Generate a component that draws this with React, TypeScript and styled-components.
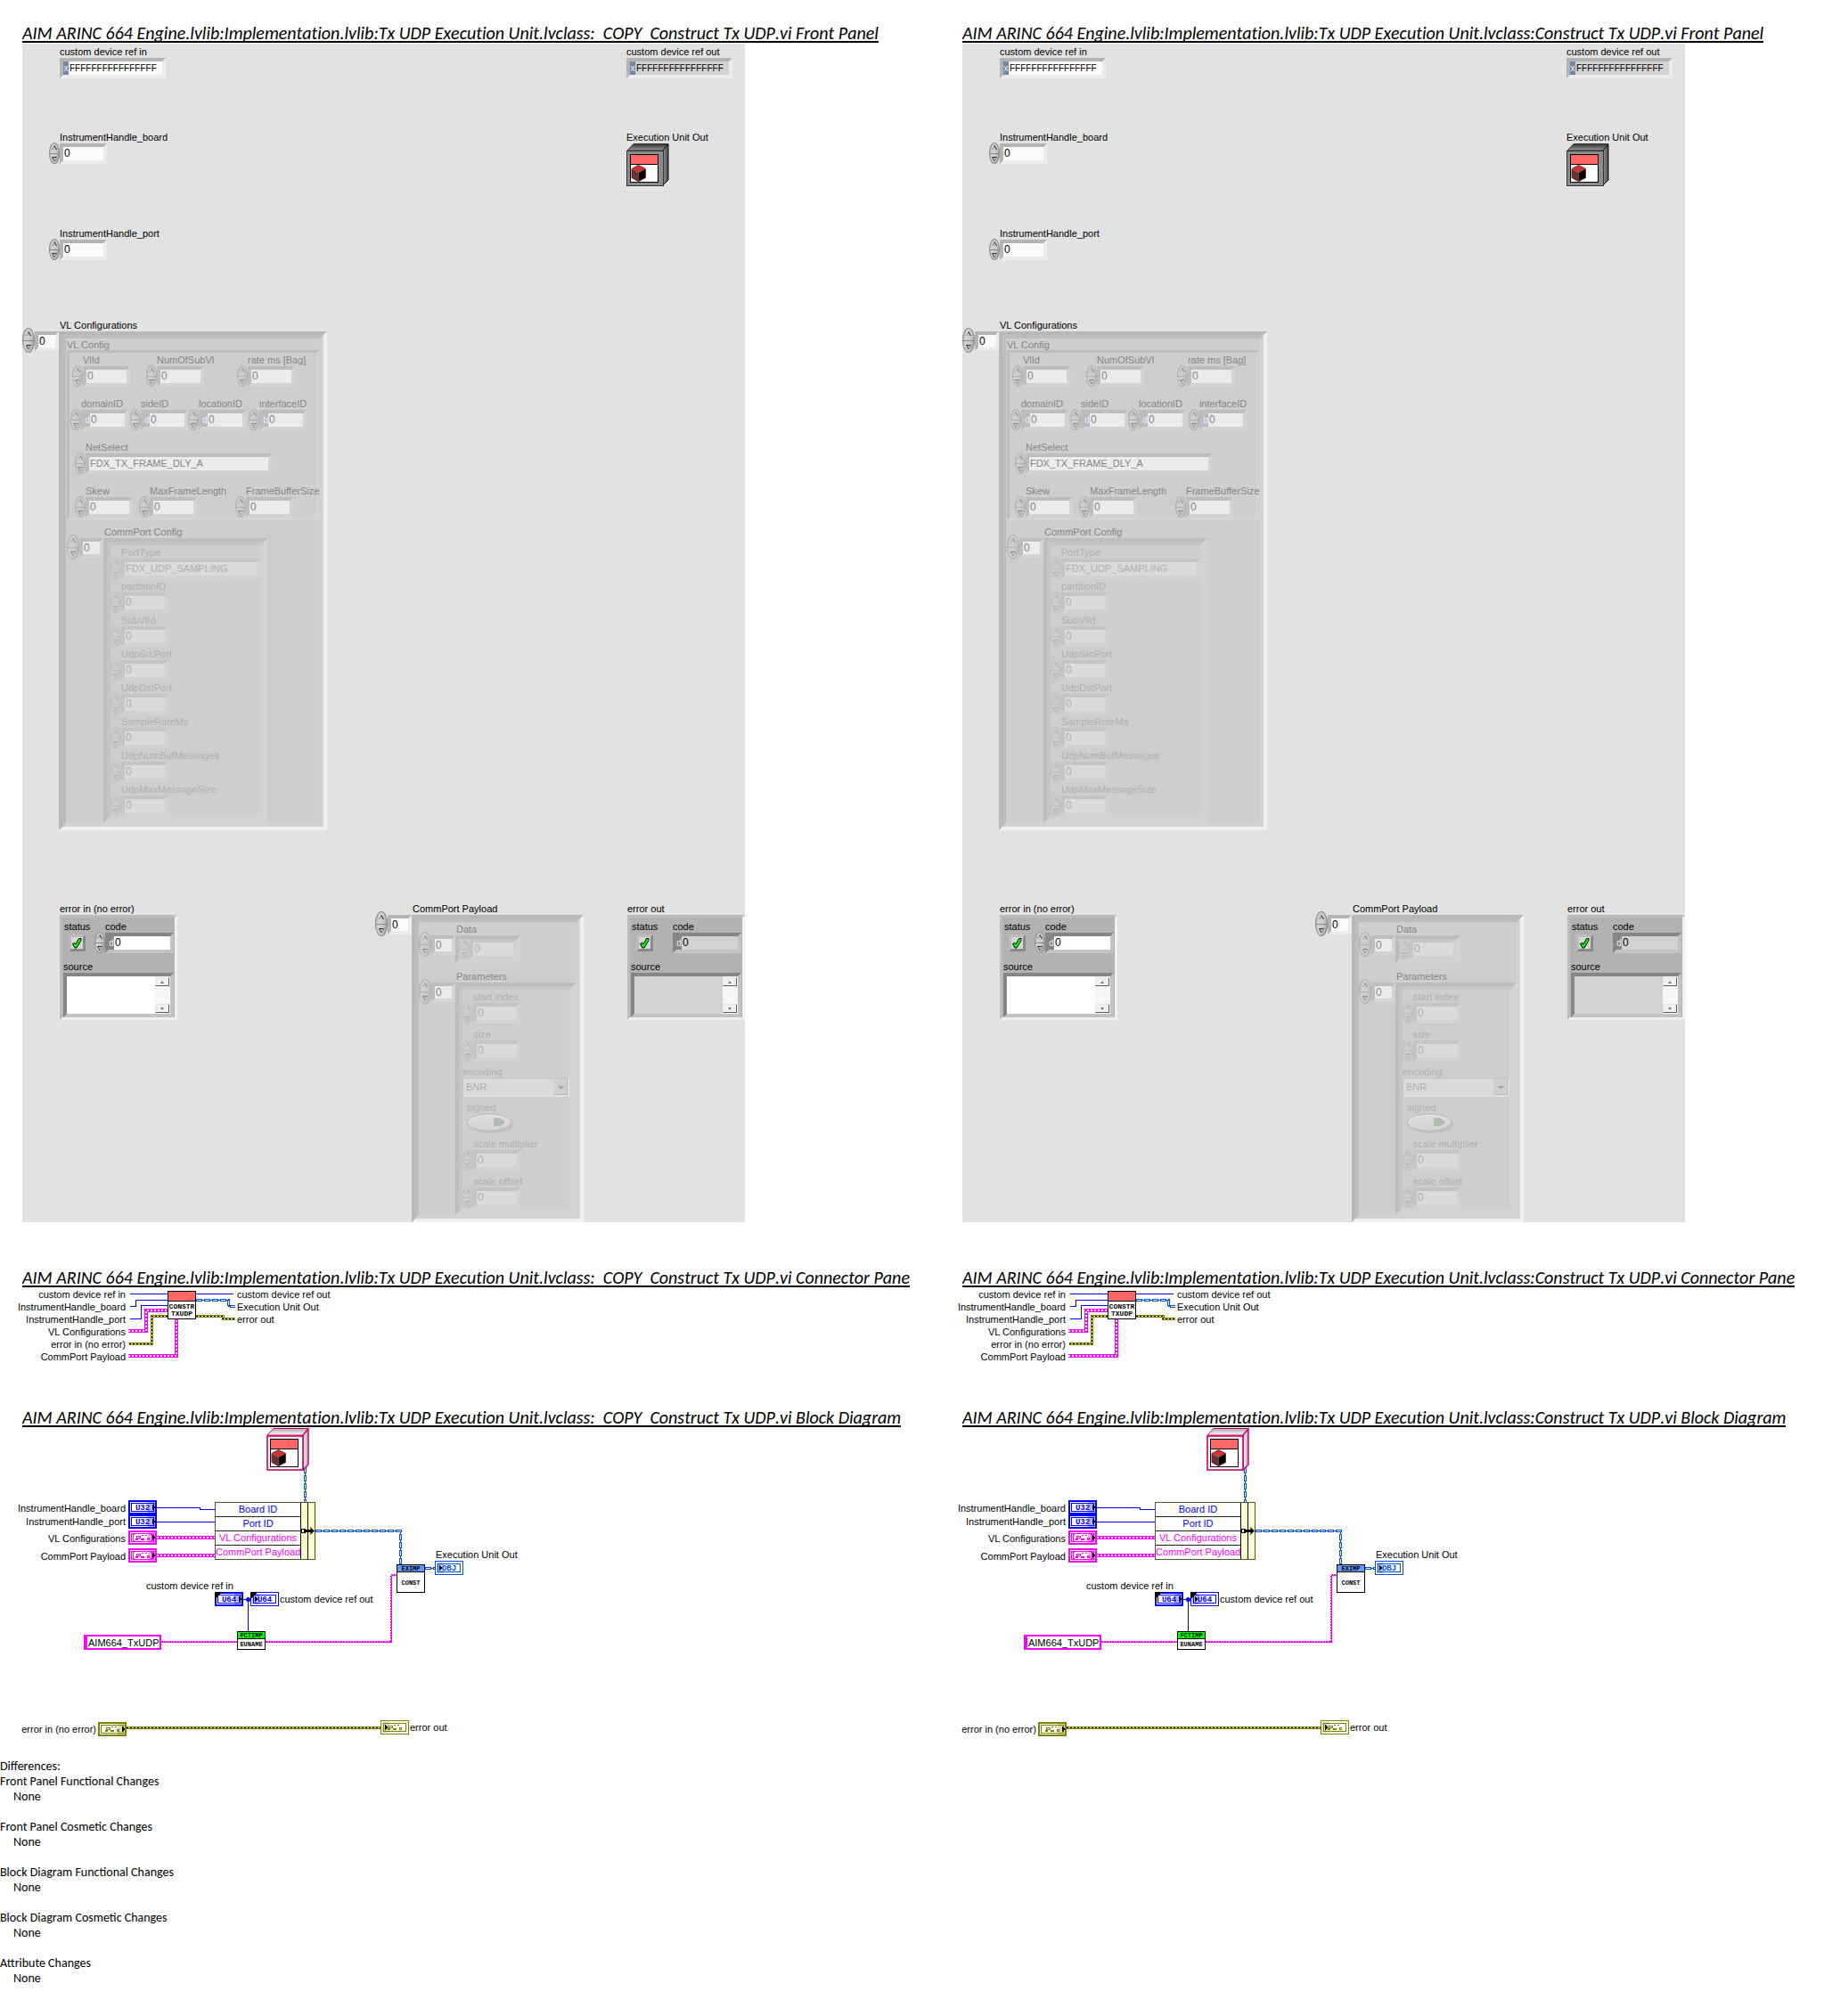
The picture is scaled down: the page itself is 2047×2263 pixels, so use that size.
import React, { useId } from 'react';
import styled, { createGlobalStyle, css, ThemeProvider } from 'styled-components';

/* ---------- tones of the front panel controls ---------- */

const normal = {
  label: '#000', text: '#000', fill: '#fafafa', indicator: '#d2d2d2',
  dark: '#b4b4b4', light: '#ececec', radix: '#7388a6', knob: 1,
};
const dimmed = {
  label: '#868686', text: '#868686', fill: '#ebebeb', indicator: '#d2d2d2',
  dark: '#bdbdbd', light: '#d3d3d3', radix: '#b4bcc8', knob: 0.45,
};
const faint = {
  label: '#b0b0b0', text: '#b0b0b0', fill: '#dadada', indicator: '#d2d2d2',
  dark: '#c5c5c5', light: '#d2d2d2', radix: '#c4c8ce', knob: 0.2,
};
const cluster = {
  label: '#000', text: '#000', fill: '#fff', indicator: '#d2d2d2',
  dark: '#868686', light: '#c3c3c3', radix: '#868686', knob: 1,
};

const GlobalStyle = createGlobalStyle`
  *, *::before, *::after { box-sizing: border-box; }
  body {
    margin: 0;
    background: #fff;
    color: #000;
    font-family: "Liberation Sans", Arial, sans-serif;
    font-size: 11px;
    line-height: 15px;
  }
  button, input, select, textarea { font: inherit; margin: 0; }
`;

/* ---------- page ---------- */

const Page = styled.main`
  padding-top: 22px;
`;

const Columns = styled.div`
  display: grid;
  grid-template-columns: minmax(0, 12fr) minmax(0, 11fr);
  padding-left: 25px;
`;

const Vi = styled.article`
  display: flex;
  flex-direction: column;
  gap: 47px;
`;

const Section = styled.section`
  display: flex;
  flex-direction: column;
  align-items: flex-start;
`;

const Title = styled.h2`
  margin: 0 0 1px;
  height: 26px;
  border-bottom: 2px solid #000;
  overflow: hidden;
  white-space: pre;
  font-family: Carlito, Calibri, Lato, sans-serif;
  font-size: 20px;
  line-height: 30px;
  font-style: italic;
  font-weight: 400;
  font-kerning: none;
  font-variant-ligatures: none;
`;

/* ---------- front panel parts ---------- */

const Panel = styled.div`
  display: grid;
  grid-template-columns: 396px 282px 133px;
  grid-template-rows: 96px 108px 103px 655px auto;
  padding-top: 1px;
  background: #e2e2e2;
`;

const Cell = styled.div<{ $row: number; $col: number; $indent?: number }>`
  grid-row: ${(p) => p.$row};
  grid-column: ${(p) => p.$col};
  padding-left: ${(p) => p.$indent ?? 0}px;
`;

const caption = css<{ $indent?: number }>`
  display: block;
  height: 15px;
  padding-left: ${(p) => p.$indent ?? 0}px;
  color: ${(p) => p.theme.label};
  line-height: 17px;
  white-space: nowrap;
`;

const Label = styled.label<{ $indent?: number }>`
  ${caption}
`;

const Caption = styled.div<{ $indent?: number }>`
  ${caption}
`;

const Line = styled.div`
  display: flex;
  align-items: flex-start;
`;

const bezel = css`
  border-style: solid;
  border-color: ${(p) => p.theme.dark} ${(p) => p.theme.light} ${(p) => p.theme.light} ${(p) => p.theme.dark};
`;

const ValueBox = styled.div<{ $width: number; $height?: number; $indicator?: boolean }>`
  ${bezel}
  display: flex;
  flex: none;
  width: ${(p) => p.$width}px;
  height: ${(p) => p.$height ?? 23}px;
  border-width: 4px;
  background: ${(p) => (p.$indicator ? p.theme.indicator : p.theme.fill)};
`;

const Radix = styled.span`
  flex: none;
  width: 6px;
  background: ${(p) => p.theme.radix};
  color: #eee;
  text-align: center;
  font-size: 10px;
  line-height: 15px;
`;

const ValueInput = styled.input<{ $size?: number }>`
  flex: 1;
  min-width: 0;
  padding: 0 0 0 1px;
  border: 0;
  outline: 0;
  background: transparent;
  color: ${(p) => p.theme.text};
  font-size: ${(p) => p.$size ?? 12}px;
  line-height: 15px;
`;

const Knob = styled.span<{ $large?: boolean }>`
  flex: none;
  display: flex;
  flex-direction: column;
  width: ${(p) => (p.$large ? 14 : 12)}px;
  height: ${(p) => (p.$large ? 28 : 24)}px;
  margin-top: ${(p) => (p.$large ? -4 : -1)}px;
  border-radius: 50%;
  overflow: hidden;
  background: linear-gradient(100deg, #a0a0a0, #d4d4d4 30%, #c8c8c8 60%, #8c8c8c);
  box-shadow: inset 0 0 1px 1px #8c8c8c;
  opacity: ${(p) => p.theme.knob};
`;

const KnobButton = styled.button`
  display: flex;
  flex: 1;
  align-items: center;
  justify-content: center;
  padding: 0;
  border: 0;
  background: transparent;

  & + & { border-top: 1px solid #8a8a8a; }

  svg { flex: none; display: block; }
`;

const Spinner = ({ large }: { large?: boolean }) => (
  <Knob $large={large}>
    <KnobButton type="button" aria-label="Increment">
      <svg width="8" height="7" viewBox="0 0 8 7">
        <path d="M1.5 6 L4 1.5 L6.5 6 Z" fill="#c4c4c4" />
        <path d="M1.5 6 L4 1.5" stroke="#8a8a8a" fill="none" />
        <path d="M4 1.5 L6.5 6" stroke="#222" fill="none" />
      </svg>
    </KnobButton>
    <KnobButton type="button" aria-label="Decrement">
      <svg width="8" height="7" viewBox="0 0 8 7">
        <path d="M1.5 1.5 H6.5 L4 6 Z" fill="#c4c4c4" />
        <path d="M6.5 1.5 L4 6" stroke="#8a8a8a" fill="none" />
        <path d="M4 6 L1.5 1.5 H6.5" stroke="#333" fill="none" />
      </svg>
    </KnobButton>
  </Knob>
);

type FieldProps = {
  label: string;
  value?: string;
  width?: number;
  size?: number;
  radix?: string;
  spinner?: boolean;
  gutter?: number;
  indicator?: boolean;
};

const Field = ({ label, value = '0', width = 53, size, radix, spinner = true, gutter = 12, indicator }: FieldProps) => {
  const id = useId();
  return (
    <div>
      <Label htmlFor={id} $indent={gutter}>{label}</Label>
      <Line>
        {spinner && <Spinner />}
        <ValueBox $width={width} $indicator={indicator}>
          {radix && <Radix>{radix}</Radix>}
          <ValueInput id={id} $size={size} defaultValue={value} readOnly={indicator} />
        </ValueBox>
      </Line>
    </div>
  );
};

const Frame = styled.div<{ $size: number; $pad?: string; $width?: number }>`
  ${bezel}
  flex: none;
  width: ${(p) => (p.$width ? `${p.$width}px` : 'auto')};
  border-width: ${(p) => p.$size}px;
  padding: ${(p) => p.$pad ?? '0'};
`;

const ArrayControl = ({ label, children }: { label: string; children: React.ReactNode }) => (
  <div>
    <Caption $indent={42}>{label}</Caption>
    <Line>
      <Spinner large />
      <ValueBox $width={27} $height={22}>
        <ValueInput aria-label={`${label} index`} defaultValue="0" />
      </ValueBox>
      {children}
    </Line>
  </div>
);

const Body = styled.div<{ $gap?: number }>`
  display: flex;
  flex-direction: column;
  gap: ${(p) => p.$gap ?? 0}px;
  background: #cecece;
`;

const FieldRow = styled.div<{ $columns: string; $indent?: number }>`
  display: grid;
  grid-template-columns: ${(p) => p.$columns};
  padding-left: ${(p) => p.$indent ?? 0}px;
`;

const GroupLabel = styled.div`
  height: 13px;
  color: ${(p) => p.theme.label};
  line-height: 15px;
`;

const commPortFields = [
  'partitionID', 'SubVlId', 'UdpSrcPort', 'UdpDstPort',
  'SampleRateMs', 'UdpNumBufMessages', 'UdpMaxMessageSize',
];

const Outer = styled(Frame)`
  border-color: #b8b8b8 #f0f0f0 #f0f0f0 #b8b8b8;
`;

const Inset = styled.div`
  padding: 0 1px;
`;

const VlConfigurations = () => (
  <ArrayControl label="VL Configurations">
    <Outer $size={4} $width={301}>
      <ThemeProvider theme={dimmed}>
        <Frame $size={4}>
          <Body $gap={5}>
            <Inset>
              <GroupLabel>VL Config</GroupLabel>
              <Frame $size={3} $pad="0 0 0 1px">
                <Body $gap={11}>
                  <FieldRow $columns="83px 102px auto" $indent={2}>
                    <Field label="VlId" />
                    <Field label="NumOfSubVl" />
                    <Field label="rate ms [Bag]" />
                  </FieldRow>
                  <FieldRow $columns="67px 65px 68px auto">
                    <Field label="domainID" radix="d" />
                    <Field label="sideID" radix="d" />
                    <Field label="locationID" radix="d" />
                    <Field label="interfaceID" radix="b" />
                  </FieldRow>
                  <FieldRow $columns="auto" $indent={5}>
                    <Field label="NetSelect" value="FDX_TX_FRAME_DLY_A" width={209} size={11} />
                  </FieldRow>
                  <FieldRow $columns="72px 108px auto" $indent={5}>
                    <Field label="Skew" />
                    <Field label="MaxFrameLength" />
                    <Field label="FrameBufferSize" />
                  </FieldRow>
                </Body>
              </Frame>
            </Inset>
            <Inset>
              <ArrayControl label="CommPort Config">
                <Frame $size={4} $width={184}>
                  <ThemeProvider theme={faint}>
                    <Frame $size={4}>
                      <Body>
                        <Field label="PortType" value="FDX_UDP_SAMPLING" width={156} size={11} />
                        {commPortFields.map((name) => <Field key={name} label={name} />)}
                      </Body>
                    </Frame>
                  </ThemeProvider>
                </Frame>
              </ArrayControl>
            </Inset>
          </Body>
        </Frame>
      </ThemeProvider>
    </Outer>
  </ArrayControl>
);

const Select = styled.select`
  display: block;
  width: 120px;
  height: 21px;
  padding: 0 0 0 3px;
  border: 1px solid;
  border-color: ${(p) => p.theme.dark} #e4e4e4 #e4e4e4 ${(p) => p.theme.dark};
  border-radius: 0;
  appearance: none;
  color: ${(p) => p.theme.text};
  background:
    linear-gradient(#a8a8a8, #a8a8a8) right 5px top 8px / 7px 1px no-repeat,
    linear-gradient(#a8a8a8, #a8a8a8) right 6px top 9px / 5px 1px no-repeat,
    linear-gradient(#a8a8a8, #a8a8a8) right 7px top 10px / 3px 1px no-repeat,
    linear-gradient(#a8a8a8, #a8a8a8) right 8px top 11px / 1px 1px no-repeat,
    linear-gradient(#bcbcbc, #bcbcbc) right 1px top 0 / 1px 18px no-repeat,
    linear-gradient(#bcbcbc, #bcbcbc) right 1px top 17px / 15px 1px no-repeat,
    linear-gradient(#d0d0d0, #d0d0d0) right 1px top 0 / 16px 18px no-repeat,
    ${(p) => p.theme.fill};
`;

const SwitchBlock = styled.div`
  padding-left: 5px;
`;

const OvalButton = styled.button`
  display: flex;
  align-items: center;
  justify-content: flex-end;
  width: 50px;
  height: 20px;
  margin-bottom: 2px;
  padding: 0 6px 0 0;
  border: 1px solid #b6b6b6;
  border-radius: 50%;
  background: linear-gradient(#dedede, #d2d2d2);
  box-shadow: inset 1px 1px 1px #e6e6e6, 2px 2px 2px #bebebe;
`;

const Payload = () => {
  const encodingId = useId();
  const signedId = useId();
  return (
    <ArrayControl label="CommPort Payload">
      <Outer $size={4} $width={193}>
        <ThemeProvider theme={dimmed}>
          <Frame $size={4}>
            <Body $gap={7}>
              <ArrayControl label="Data">
                <Frame $size={4}>
                  <ThemeProvider theme={faint}>
                    <Line>
                      <Spinner />
                      <ValueBox $width={53}>
                        <ValueInput aria-label="Data element" defaultValue="0" />
                      </ValueBox>
                    </Line>
                  </ThemeProvider>
                </Frame>
              </ArrayControl>
              <ArrayControl label="Parameters">
                <Frame $size={4} $width={136}>
                  <ThemeProvider theme={faint}>
                    <Frame $size={4}>
                      <Body $gap={4}>
                        <Field label="start index" />
                        <Field label="size" />
                        <div>
                          <Label htmlFor={encodingId}>encoding</Label>
                          <Select id={encodingId} defaultValue="BNR">
                            <option>BNR</option>
                          </Select>
                        </div>
                        <SwitchBlock>
                          <Label htmlFor={signedId}>signed</Label>
                          <OvalButton id={signedId} type="button">
                            <svg width="14" height="10" viewBox="0 0 14 10">
                              <path d="M1 0 H8 L13 3 V6 L8 9 H1 Z" fill="#b3bcb0" />
                            </svg>
                          </OvalButton>
                        </SwitchBlock>
                        <Field label="scale multiplier" />
                        <Field label="scale offset" />
                      </Body>
                    </Frame>
                  </ThemeProvider>
                </Frame>
              </ArrayControl>
            </Body>
          </Frame>
        </ThemeProvider>
      </Outer>
    </ArrayControl>
  );
};

/* ---------- error clusters ---------- */

const ErrorFrame = styled.div`
  display: flex;
  flex-direction: column;
  gap: 7px;
  width: 132px;
  padding: 2px 1px 0 1px;
  border: 3px solid;
  border-color: #bdbdbd #f0f0f0 #f0f0f0 #bdbdbd;
  background: #b2b2b2;
`;

const ErrorTop = styled.div`
  display: flex;
  justify-content: space-between;
`;

const Status = styled.div`
  display: flex;
  flex-direction: column;
  align-items: center;
  padding-left: 1px;
`;

const StatusButton = styled.button`
  display: flex;
  align-items: center;
  justify-content: center;
  width: 19px;
  height: 19px;
  margin-top: 2px;
  padding: 0;
  border: 3px solid;
  border-color: #bcbcbc #8a8a8a #8a8a8a #bcbcbc;
  background: #d6d6d6;
`;

const SourceBox = styled.div<{ $indicator?: boolean }>`
  ${bezel}
  display: flex;
  height: 50px;
  border-width: 4px;
  background: ${(p) => (p.$indicator ? p.theme.indicator : p.theme.fill)};
`;

const SourceText = styled.textarea`
  flex: 1;
  min-width: 0;
  padding: 0;
  border: 0;
  resize: none;
  background: transparent;
`;

const ScrollTrack = styled.div`
  display: flex;
  flex-direction: column;
  justify-content: space-between;
  width: 17px;
  padding: 1px 1px 1px 0;
  background: #f6f6f6;
`;

const ScrollButton = styled.button`
  display: flex;
  align-items: center;
  justify-content: center;
  height: 10px;
  padding: 0;
  border: 1px solid;
  border-color: #e6e6e6 #5c5c5c #5c5c5c #e6e6e6;
  background: #f0f0f0;
`;

const ErrorCluster = ({ label, indicator }: { label: string; indicator?: boolean }) => {
  const statusId = useId();
  const sourceId = useId();
  return (
    <div>
      <Caption>{label}</Caption>
      <ThemeProvider theme={cluster}>
        <ErrorFrame>
          <ErrorTop>
            <Status>
              <Label htmlFor={statusId}>status</Label>
              <StatusButton id={statusId} type="button">
                <svg width="13" height="13" viewBox="0 0 13 13">
                  <path d="M1.5 7.5 L4 6.5 L5 8 L8.5 1.5 L11 1.5 L11 3.5 L6 12 L4 12 Z" fill="#0f0" stroke="#000" />
                </svg>
              </StatusButton>
            </Status>
            <Field label="code" radix="d" width={77} spinner={!indicator} gutter={indicator ? 0 : 12} indicator={indicator} />
          </ErrorTop>
          <div>
            <Label htmlFor={sourceId}>source</Label>
            <SourceBox $indicator={indicator}>
              <SourceText id={sourceId} readOnly={indicator} />
              <ScrollTrack>
                <ScrollButton type="button" aria-label="Scroll up">
                  <svg width="4" height="3" viewBox="0 0 4 3"><path d="M0 3 L2 0 L4 3 Z" fill="#777" /></svg>
                </ScrollButton>
                <ScrollButton type="button" aria-label="Scroll down">
                  <svg width="4" height="3" viewBox="0 0 4 3"><path d="M0 0 L2 3 L4 0 Z" fill="#777" /></svg>
                </ScrollButton>
              </ScrollTrack>
            </SourceBox>
          </div>
        </ErrorFrame>
      </ThemeProvider>
    </div>
  );
};

/* ---------- class icon ---------- */

const ClassIcon = ({ pink }: { pink?: boolean }) => {
  const id = useId();
  const edge = pink ? '#cc0066' : '#333';
  const slab = pink ? 2 : 1;
  return (
    <svg width="48" height="48" viewBox="0 0 48 48" display="block" role="img" aria-label="Execution unit class">
      <defs>
        <linearGradient id={`${id}t`} x1="0" y1="0" x2="0" y2="1">
          <stop offset="0" stopColor={pink ? '#aaa' : '#333'} />
          <stop offset="1" stopColor={pink ? '#fff' : '#999'} />
        </linearGradient>
        <linearGradient id={`${id}s`} x1="0" y1="0" x2="1" y2="0">
          <stop offset="0" stopColor={pink ? '#fff' : '#999'} />
          <stop offset="1" stopColor={pink ? '#aaa' : '#444'} />
        </linearGradient>
      </defs>
      <path d="M1 8 L8 0.5 H47 L41 8 Z" fill={`url(#${id}t)`} stroke={edge} />
      <path d="M41 8 L47 1 V41 L41 47 Z" fill={`url(#${id}s)`} stroke={pink ? edge : '#111'} strokeWidth={pink ? 1.4 : 1} />
      <rect x={slab / 2} y={8 + slab / 2} width={42 - slab} height={40 - slab} fill={pink ? '#fff' : '#8c8c8c'} stroke={edge} strokeWidth={pink ? 1.6 : 1} />
      <g shapeRendering="crispEdges">
        <rect x="4" y="12" width="32" height="32" fill="#000" />
        <rect x="5" y="13" width="30" height="10" fill="#ff6666" />
        <rect x="5" y="24" width="30" height="19" fill="#fff" />
      </g>
      <path d="M13.5 24.5 L21.5 28.5 L13.5 33 L6 28.5 Z" fill="#cc3333" />
      <path d="M6 28.5 L13.5 33 V43 L6 38.5 Z" fill="#663333" />
      <path d="M21.5 28.5 L13.5 33 V43 L21.5 38.5 Z" fill="#000" />
      <path d="M13.5 24.5 L21.5 28.5 V38.5 L13.5 42.5 L6 38.5 V28.5 Z" fill="none" stroke="#882222" />
    </svg>
  );
};

const FrontPanel = () => (
  <ThemeProvider theme={normal}>
    <Panel>
      <Cell $row={1} $col={1} $indent={42}>
        <Field label="custom device ref in" value="FFFFFFFFFFFFFFFF" size={10} radix="x" width={119} spinner={false} gutter={0} />
      </Cell>
      <Cell $row={1} $col={3}>
        <Field label="custom device ref out" value="FFFFFFFFFFFFFFFF" size={10} radix="x" width={119} spinner={false} gutter={0} indicator />
      </Cell>
      <Cell $row={2} $col={1} $indent={30}>
        <Field label="InstrumentHandle_board" />
      </Cell>
      <Cell $row={2} $col={3}>
        <Caption>Execution Unit Out</Caption>
        <ClassIcon />
      </Cell>
      <Cell $row={3} $col={1} $indent={30}>
        <Field label="InstrumentHandle_port" />
      </Cell>
      <Cell $row={4} $col={1}>
        <VlConfigurations />
      </Cell>
      <Cell $row={5} $col={1} $indent={42}>
        <ErrorCluster label="error in (no error)" />
      </Cell>
      <Cell $row={5} $col={2}>
        <Payload />
      </Cell>
      <Cell $row={5} $col={3} $indent={1}>
        <ErrorCluster label="error out" indicator />
      </Cell>
    </Panel>
  </ThemeProvider>
);

/* ---------- wires ---------- */

const Wire = ({ d, kind }: { d: string; kind: 'int' | 'class' | 'cluster' | 'error' | 'string' }) => {
  switch (kind) {
    case 'int':
      return <path d={d} fill="none" stroke="#0000ff" />;
    case 'class':
      return (
        <g fill="none">
          <path d={d} stroke="#0050d8" />
          <path d={d} stroke="#0050d8" strokeWidth="3" strokeDasharray="7 2" />
          <path d={d} stroke="#fff" strokeDasharray="5 4" strokeDashoffset="-1" />
        </g>
      );
    case 'cluster':
      return (
        <g fill="none">
          <path d={d} stroke="#ff00ff" strokeWidth="4" />
          <path d={d} stroke="#fff" strokeWidth="2" strokeDasharray="2 2" />
        </g>
      );
    case 'error':
      return (
        <g fill="none">
          <path d={d} stroke="#808000" strokeWidth="3" />
          <path d={d} stroke="#ffff33" />
          <path d={d} stroke="#000" strokeDasharray="2 2" />
        </g>
      );
    default:
      return (
        <g fill="none">
          <path d={d} stroke="#ff00ff" strokeWidth="2" strokeDasharray="2 1" />
          <path d={d} stroke="#ff00ff" />
        </g>
      );
  }
};

const IconText = styled.text`
  font-family: "Liberation Mono", monospace;
  font-size: 8px;
  font-weight: 700;
  text-anchor: middle;
`;

/* ---------- connector pane ---------- */

const Connector = styled.div`
  display: flex;
  height: 83px;
  line-height: 14px;
`;

const Terminals = styled.ul<{ $side: 'in' | 'out' }>`
  display: flex;
  flex-direction: column;
  align-items: ${(p) => (p.$side === 'in' ? 'flex-end' : 'flex-start')};
  width: ${(p) => (p.$side === 'in' ? '116px' : 'auto')};
  margin: 0;
  padding: 0;
  list-style: none;
  white-space: nowrap;
`;

const ConnectorPane = () => (
  <Connector>
    <Terminals $side="in">
      <li>custom device ref in</li>
      <li>InstrumentHandle_board</li>
      <li>InstrumentHandle_port</li>
      <li>VL Configurations</li>
      <li>error in (no error)</li>
      <li>CommPort Payload</li>
    </Terminals>
    <svg width="125" height="83" viewBox="0 0 125 83" shapeRendering="crispEdges">
      <Wire kind="int" d="M5 6.5 H47" />
      <Wire kind="int" d="M5 20.5 H11.5 V13.5 H47" />
      <Wire kind="int" d="M5 34.5 H17.5 V19.5 H47" />
      <Wire kind="cluster" d="M3 48 H23 V25 H47" />
      <Wire kind="error" d="M4 62.5 H29.5 V31.5 H47" />
      <Wire kind="cluster" d="M3 76 H57 V35" />
      <Wire kind="int" d="M79 6.5 H121" />
      <Wire kind="class" d="M79 13.5 H115.5 V20.5 H123" />
      <Wire kind="error" d="M79 31.5 H109.5 V34.5 H123" />
      <rect x="47" y="3" width="32" height="32" fill="#000" />
      <rect x="48" y="4" width="30" height="10" fill="#ff6666" />
      <rect x="48" y="15" width="30" height="19" fill="#fff" />
      <IconText x="63" y="23">CONSTR</IconText>
      <IconText x="63" y="31">TXUDP</IconText>
    </svg>
    <Terminals $side="out">
      <li>custom device ref out</li>
      <li>Execution Unit Out</li>
      <li>error out</li>
    </Terminals>
  </Connector>
);

/* ---------- block diagram ---------- */

const Canvas = styled.div`
  position: relative;
  width: 560px;
  height: 344px;
  line-height: 14px;
`;

const Node = styled.div<{ $x: number; $y: number }>`
  position: absolute;
  left: ${(p) => p.$x}px;
  top: ${(p) => p.$y}px;
  white-space: nowrap;
`;

const LeadLabel = styled(Node)`
  left: auto;
  right: calc(100% - ${(p) => p.$x}px);
`;

const Wires = styled.svg`
  position: absolute;
  inset: 0;
`;

const Drawing = styled.svg`
  display: block;
`;

type TerminalProps = { color: string; type?: string; output?: boolean; bracket?: boolean; corner?: boolean };

const Terminal = ({ color, type, output, bracket, corner }: TerminalProps) => (
  <Drawing width="32" height="16" viewBox="0 0 32 16" shapeRendering="crispEdges">
    <rect width="32" height="16" fill={color} />
    {output
      ? <rect x="1" y="1" width="30" height="14" fill="#fff" />
      : <rect x="2" y="2" width="28" height="12" fill="#fff" />}
    <rect x="3.5" y="3.5" width="25" height="9" fill="none" stroke={color} />
    {type && <IconText x="16" y="11" fill={color} style={{ fontSize: 9 }}>{type}</IconText>}
    {!type && (
      <g fill="none" stroke={color}>
        <path d="M9 6.5 H13 V8.5 H9 Z" />
        <path d="M15 5.5 H17 M19 5.5 H21" />
        <path d="M8 10 H11 M14 10 H18" strokeWidth="2" />
        <path d="M21 8.5 H23 V10.5 H21 Z" />
        {bracket && <path d="M7 4.5 H5.5 V11.5 H7 M25 4.5 H26.5 V11.5 H25" />}
      </g>
    )}
    <rect x={output ? 2 : 22} y="2" width="8" height="12" fill={color} opacity="0.3" />
    <path d={output ? 'M5 5 L8 8 L5 11 Z' : 'M27 5 L30 8 L27 11 Z'} fill="#000" />
    {corner && <path d="M0 0 H8 L0 8 Z" fill="#000" />}
  </Drawing>
);

const Bundle = styled.div`
  display: grid;
  grid-template-columns: 95px 8px 8px;
  border: 1px solid #555533;
`;

const BundleNames = styled.ul`
  margin: 0;
  padding: 0;
  list-style: none;
  background: #fff;
`;

const BundleName = styled.li<{ $color: string }>`
  height: 16px;
  color: ${(p) => p.$color};
  text-align: center;
  line-height: 15px;

  &:first-child { height: 15px; }
  & + & { border-top: 1px solid #222; }
`;

const BundleBar = styled.span`
  border-left: 1px solid #000;
  background: #ffffcc;
`;

const StringConstant = styled.input`
  display: block;
  width: 87px;
  height: 17px;
  padding: 0 0 0 1px;
  border: 2px solid #ff00ff;
  border-left-width: 4px;
`;

const SubVi = ({ name, body, color, height, head }: { name: string; body: string; color: string; height: number; head: number }) => (
  <Drawing width="32" height={height} viewBox={`0 0 32 ${height}`} shapeRendering="crispEdges">
    <rect width="32" height={height} fill="#000" />
    <rect x="1" y="1" width="30" height={head - 2} fill={color} />
    <rect x="1" y={head} width="30" height={height - head - 1} fill="#fff" />
    <IconText x="16" y="7" style={{ fontSize: 7 }}>{name}</IconText>
    <IconText x="16" y={head + Math.round((height - head) / 2) + 2} style={{ fontSize: 7 }}>{body}</IconText>
  </Drawing>
);

const BLUE = '#0000ff';
const PINK = '#ff00ff';
const OLIVE = '#808000';

const BlockDiagram = () => (
  <Canvas>
    <Wires width="560" height="344" viewBox="0 0 560 344" shapeRendering="crispEdges">
      <Wire kind="class" d="M317.5 44 V83" />
      <Wire kind="int" d="M151 89.5 H199.5 V91.5 H216" />
      <Wire kind="int" d="M151 105.5 H216" />
      <Wire kind="cluster" d="M151 123 H216" />
      <Wire kind="cluster" d="M151 143 H216" />
      <Wire kind="class" d="M329 115.5 H424.5 V153" />
      <Wire kind="class" d="M452 157.5 H463" />
      <Wire kind="int" d="M247 192.5 H256 M253.5 192 V228" />
      <Wire kind="string" d="M156 240 H241" />
      <Wire kind="string" d="M273 240 H414 V165 H420" />
      <Wire kind="error" d="M117 336.5 H402" />
    </Wires>

    <Node $x={274} $y={0}><ClassIcon pink /></Node>

    <LeadLabel $x={116} $y={83}>InstrumentHandle_board</LeadLabel>
    <LeadLabel $x={116} $y={98}>InstrumentHandle_port</LeadLabel>
    <LeadLabel $x={116} $y={117}>VL Configurations</LeadLabel>
    <LeadLabel $x={116} $y={137}>CommPort Payload</LeadLabel>
    <Node $x={119} $y={81}><Terminal color={BLUE} type="U32" /></Node>
    <Node $x={119} $y={97}><Terminal color={BLUE} type="U32" /></Node>
    <Node $x={119} $y={115}><Terminal color={PINK} bracket /></Node>
    <Node $x={119} $y={135}><Terminal color={PINK} bracket /></Node>

    <Node $x={216} $y={83}>
      <Bundle>
        <BundleNames>
          <BundleName $color={BLUE}>Board ID</BundleName>
          <BundleName $color={BLUE}>Port ID</BundleName>
          <BundleName $color={PINK}>VL Configurations</BundleName>
          <BundleName $color={PINK}>CommPort Payload</BundleName>
        </BundleNames>
        <BundleBar />
        <BundleBar />
      </Bundle>
    </Node>
    <Node $x={312} $y={111}>
      <Drawing width="17" height="9" viewBox="0 0 17 9">
        <path d="M1 2 H6 V7 H1 Z M6 3 H12 V6 H6 Z M11 0 L16 4.5 L11 9 L12 4.5 Z" fill="#000" />
        <rect x="2" y="3" width="2" height="3" fill="#ffffcc" />
      </Drawing>
    </Node>

    <Node $x={420} $y={153}><SubVi name="EXIMP" body="CONST" color="#6699ff" height={32} head={9} /></Node>
    <Node $x={464} $y={135}>Execution Unit Out</Node>
    <Node $x={463} $y={149}><Terminal color="#0050d8" type="OBJ" output /></Node>

    <Node $x={139} $y={170}>custom device ref in</Node>
    <Node $x={216} $y={184}><Terminal color={BLUE} type="U64" corner /></Node>
    <Node $x={256} $y={184}><Terminal color={BLUE} type="U64" output corner /></Node>
    <Node $x={289} $y={185}>custom device ref out</Node>
    <Node $x={251} $y={190}>
      <Drawing width="5" height="5" viewBox="0 0 5 5"><circle cx="2.5" cy="2.5" r="2.5" fill={BLUE} /></Drawing>
    </Node>

    <Node $x={241} $y={228}><SubVi name="FCTIMP" body="EUNAME" color="#00ff00" height={21} head={9} /></Node>
    <Node $x={69} $y={232}><StringConstant aria-label="String constant" defaultValue="AIM664_TxUDP" /></Node>

    <LeadLabel $x={83} $y={331}>error in (no error)</LeadLabel>
    <Node $x={85} $y={330}><Terminal color={OLIVE} /></Node>
    <Node $x={402} $y={328}><Terminal color={OLIVE} output /></Node>
    <Node $x={435} $y={329}>error out</Node>
  </Canvas>
);

/* ---------- differences ---------- */

const Differences = styled.section`
  margin-top: 27px;
  padding-bottom: 34px;
  font-family: Carlito, Calibri, Lato, sans-serif;
  font-size: 14px;
  line-height: 17px;
`;

const Plain = styled.h2`
  margin: 0;
  font-size: 14px;
  font-weight: 400;
`;

const ChangeList = styled.dl`
  display: flex;
  flex-direction: column;
  gap: 17px;
  margin: 0;

  dd { margin: 0 0 0 15px; }
`;

const changes = [
  'Front Panel Functional Changes',
  'Front Panel Cosmetic Changes',
  'Block Diagram Functional Changes',
  'Block Diagram Cosmetic Changes',
  'Attribute Changes',
];

const base = 'AIM ARINC 664 Engine.lvlib:Implementation.lvlib:Tx UDP Execution Unit.lvclass:';

const ViReport = ({ name }: { name: string }) => (
  <Vi>
    <Section>
      <Title>{`${base}${name} Front Panel`}</Title>
      <FrontPanel />
    </Section>
    <Section>
      <Title>{`${base}${name} Connector Pane`}</Title>
      <ConnectorPane />
    </Section>
    <Section>
      <Title>{`${base}${name} Block Diagram`}</Title>
      <BlockDiagram />
    </Section>
  </Vi>
);

export default function App() {
  return (
    <Page>
      <GlobalStyle />
      <Columns>
        <ViReport name="  COPY  Construct Tx UDP.vi" />
        <ViReport name="Construct Tx UDP.vi" />
      </Columns>
      <Differences>
        <Plain>Differences:</Plain>
        <ChangeList>
          {changes.map((name) => (
            <div key={name}>
              <dt>{name}</dt>
              <dd>None</dd>
            </div>
          ))}
        </ChangeList>
      </Differences>
    </Page>
  );
}
